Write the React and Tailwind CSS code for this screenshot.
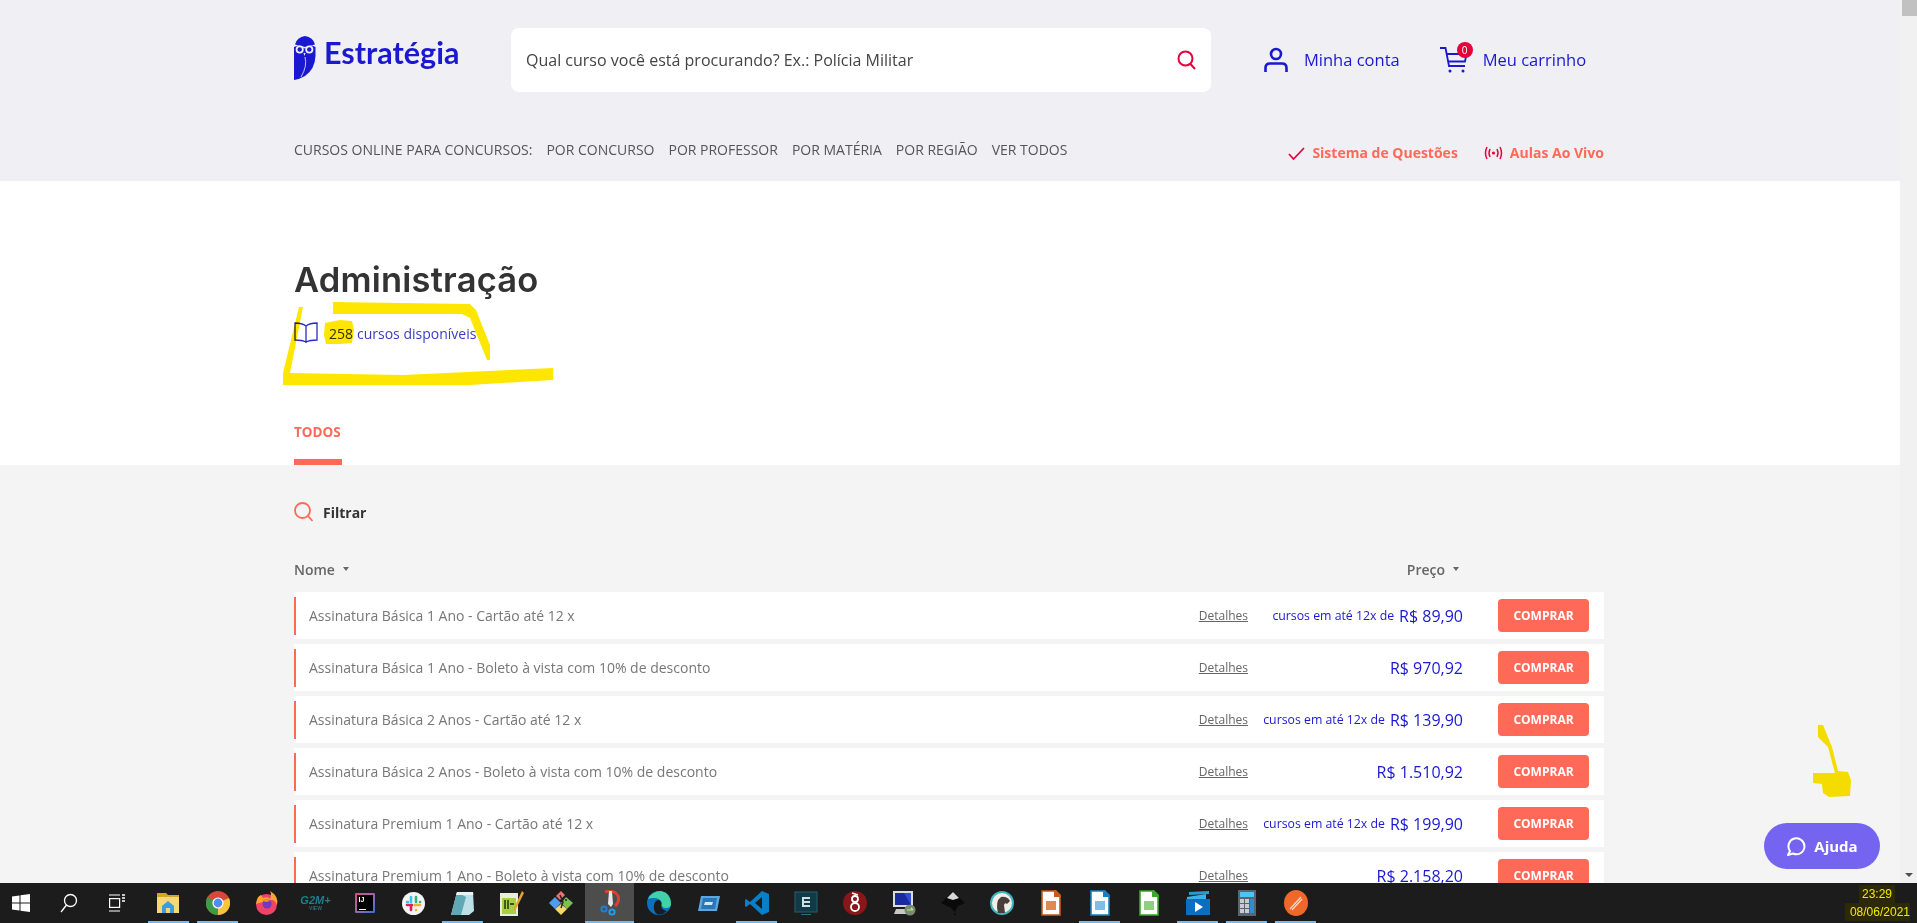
import React from 'react';

const courses = [
  { name: 'Assinatura Básica 1 Ano - Cartão até 12 x', installment: true, price: 'R$ 89,90' },
  { name: 'Assinatura Básica 1 Ano - Boleto à vista com 10% de desconto', price: 'R$ 970,92' },
  { name: 'Assinatura Básica 2 Anos - Cartão até 12 x', installment: true, price: 'R$ 139,90' },
  { name: 'Assinatura Básica 2 Anos - Boleto à vista com 10% de desconto', price: 'R$ 1.510,92' },
  { name: 'Assinatura Premium 1 Ano - Cartão até 12 x', installment: true, price: 'R$ 199,90' },
  { name: 'Assinatura Premium 1 Ano - Boleto à vista com 10% de desconto', price: 'R$ 2.158,20' },
];

const navLinks = ['POR CONCURSO', 'POR PROFESSOR', 'POR MATÉRIA', 'POR REGIÃO', 'VER TODOS'];

const OwlLogo = () => (
  <svg width="22" height="44" viewBox="0 0 22 44" className="shrink-0">
    <path d="M1 8.5 Q3 1 11 0 Q19 1 21 8.5 L11 11 Z" fill="#1a18d0" />
    <path d="M0 11 L4 9.5 L11 12.5 L18 9.5 L21.5 11 V20 Q21 33 11 40 Q6 43 0 44 Z" fill="#1a18d0" />
    <circle cx="5.7" cy="13.5" r="4" fill="#efeff4" />
    <circle cx="15.3" cy="13.5" r="4" fill="#efeff4" />
    <circle cx="5.7" cy="13.5" r="2.2" fill="#1a18d0" />
    <circle cx="15.3" cy="13.5" r="2.2" fill="#1a18d0" />
    <path d="M9.5 17 L10.5 20 L11.6 17 Z" fill="#efeff4" />
    <path d="M11 21 Q13.5 30 7 41" fill="none" stroke="#efeff4" strokeWidth="0.8" />
  </svg>
);

const UserIcon = () => (
  <svg width="24" height="26" viewBox="0 0 24 26" fill="none" stroke="#1a18d0" strokeWidth="2.6">
    <circle cx="12" cy="7" r="5" />
    <path d="M1.5 25 V21 Q1.5 16.5 6 16.5 H18 Q22.5 16.5 22.5 21 V25" />
  </svg>
);

const CartIcon = () => (
  <svg width="28" height="26" viewBox="0 0 28 26" fill="none" stroke="#1a18d0" strokeWidth="1.8">
    <path d="M0 1 H5.5 L9 19 H25" />
    <path d="M6.5 7 H26.5 L25 14.5 H8" />
    <circle cx="10" cy="24" r="1.5" fill="#1a18d0" stroke="none" />
    <circle cx="23" cy="24" r="1.5" fill="#1a18d0" stroke="none" />
  </svg>
);

const LiveIcon = () => (
  <svg width="19" height="14" viewBox="0 0 19 14" fill="none" stroke="#e8003a" strokeWidth="1.5">
    <circle cx="9.5" cy="7" r="1.6" fill="#e8003a" stroke="none" />
    <path d="M6 3 Q4 7 6 11 M13 3 Q15 7 13 11" />
    <path d="M3 1 Q0 7 3 13 M16 1 Q19 7 16 13" />
  </svg>
);

const SortArrow = () => <span className="ml-2 h-0 w-0 border-x-[3px] border-t-[4px] border-x-transparent border-t-[#666]" />;

const CourseRow = ({ course }) => (
  <div className="mb-[5px] flex h-[47px] w-[1310px] shrink-0 items-center bg-white pr-[15px]">
    <div className="h-[38px] w-[2px] bg-[#ff6958]" />
    <span className="ml-[13px] text-[14px] text-[#777]">{course.name}</span>
    <a className="ml-auto text-[12px] text-[#666] underline">Detalhes</a>
    <div className="flex w-[215px] items-center justify-end whitespace-nowrap text-[#1a18d0]">
      {course.installment && <span className="mr-[5px] mt-[2px] text-[12.3px]">cursos em até 12x de</span>}
      <span className="text-[16px] font-medium">{course.price}</span>
    </div>
    <button className="ml-[35px] h-[33px] w-[91px] rounded-[4px] bg-[#ff6958] text-[12px] font-bold text-white">COMPRAR</button>
  </div>
);

// taskbar icons, all on a 28 box
const Icons = {
  Explorer: () => (
    <svg width="24" height="22" viewBox="0 0 24 22">
      <path d="M0 1 H9 L11 3 H22 V21 H0 Z" fill="#d9a520" />
      <path d="M0 5 H22 V21 H0 Z" fill="#f7d774" />
      <path d="M5 14 L11 9 L17 14 V21 H13 V16 H9 V21 H5 Z" fill="#3a9be8" />
    </svg>
  ),
  Chrome: () => (
    <svg width="24" height="24" viewBox="0 0 24 24">
      <circle cx="12" cy="12" r="12" fill="#d8483a" />
      <path d="M12 12 L1.5 6 A12 12 0 0 0 12 24 Z" fill="#3f9a48" />
      <path d="M12 12 L12 24 A12 12 0 0 0 23 7 Z" fill="#f5c63c" />
      <circle cx="12" cy="12" r="5.6" fill="#fff" />
      <circle cx="12" cy="12" r="4.4" fill="#4d8ef0" />
    </svg>
  ),
  Firefox: () => (
    <svg width="24" height="24" viewBox="0 0 24 24">
      <circle cx="11.5" cy="13.5" r="10.5" fill="#f0436a" />
      <path d="M1 13 Q2 5 6 4 L8 7 Q13 5 15 8 Q17 3 15 0 Q24 5 22 14 Q20 8 14 9 Z" fill="#ffa42e" />
      <circle cx="12" cy="13" r="4.5" fill="#6d3bc4" />
      <path d="M6 9 Q11 7 15 10 L11 11 Z" fill="#ff8a2a" />
    </svg>
  ),
  G2m: () => (
    <div className="flex flex-col items-center leading-none">
      <span className="font-['Liberation_Sans',sans-serif] text-[11px] font-bold italic text-[#1f7f8c]">G2M+</span>
      <span className="font-['Liberation_Sans',sans-serif] text-[5px] font-bold text-[#2a6f7a]">VIEW</span>
    </div>
  ),
  Idea: () => (
    <div className="rounded-[1px] bg-gradient-to-br from-[#e0417e] to-[#2a6fd6] p-[2px]">
      <div className="flex h-[16px] w-[16px] flex-col justify-between bg-black px-[2px] py-[1px] font-['Liberation_Sans',sans-serif] text-[7px] font-bold leading-none text-white">
        <span>IJ</span>
        <span className="h-[1px] w-[7px] bg-white" />
      </div>
    </div>
  ),
  Slack: () => (
    <svg width="23" height="23" viewBox="0 0 23 23">
      <circle cx="11.5" cy="11.5" r="11.5" fill="#f4f4f4" />
      <g strokeWidth="2.6" strokeLinecap="round">
        <path d="M9 5 V10 M5 10 H6" stroke="#36c5f0" />
        <path d="M14 5 V10 M18 10 H18" stroke="#2eb67d" />
        <path d="M18 13 H13 M14 18 V18" stroke="#ecb22e" />
        <path d="M5 13 H10 M9 18 V14" stroke="#e01e5a" />
      </g>
    </svg>
  ),
  Notepad: () => (
    <svg width="24" height="25" viewBox="0 0 24 25">
      <path d="M6 1 H22 L23 20 L18 24 H0 Z" fill="#bde0e6" />
      <path d="M6 1 L0 24 H10 L15 6 Z" fill="#5fa8b5" />
      <path d="M6 1 H22 L22.3 4 H5 Z" fill="#e9f2f3" />
    </svg>
  ),
  Npp: () => (
    <svg width="24" height="26" viewBox="0 0 24 26">
      <path d="M0 3 H18 V26 H0 Z" fill="#e8eed8" />
      <path d="M2 8 H16 V24 H2 Z" fill="#a7cf3f" />
      <path d="M5 10 V19 M8 10 V19 M10 14 H14" stroke="#1a2a10" strokeWidth="1.4" />
      <path d="M22 1 L14 18 L13 21 L16 19 L24 3 Z" fill="#e8a028" />
    </svg>
  ),
  Git: () => (
    <svg width="24" height="26" viewBox="0 0 24 26">
      <path d="M7 6 L12 1 L16 5 L11 10 Z" fill="#f07070" />
      <path d="M0 13 L6 7 L12 13 L6 19 Z" fill="#4f9bef" />
      <path d="M12 13 L17 7 L24 13 L18 19 Z" fill="#7cc04f" />
      <path d="M6 19 L12 14 L18 19 L12 25 Z" fill="#f5d86a" />
      <path d="M11 5 L14 12 L12 18 M16 10 H18" stroke="#222" strokeWidth="1.4" fill="none" />
    </svg>
  ),
  Snip: () => (
    <svg width="20" height="26" viewBox="0 0 20 26">
      <path d="M5 2 Q14 -1 18 6 Q20 12 15 16" fill="none" stroke="#d8432a" strokeWidth="3" />
      <path d="M9 1 H12 L13 14 L11 17 L8 14 Z" fill="#e8e8e8" />
      <circle cx="4" cy="19" r="2.6" fill="none" stroke="#1c7fd8" strokeWidth="2" />
      <circle cx="12" cy="22" r="2.6" fill="none" stroke="#1c9fe8" strokeWidth="2" />
    </svg>
  ),
  Edge: () => (
    <svg width="24" height="24" viewBox="0 0 24 24">
      <circle cx="12" cy="12" r="12" fill="#0c6fc0" />
      <path d="M1 8 Q5 0 14 0 Q24 2 24 13 Q24 17 19 17 Q14 17 15 12 Q13 7 7 7 Q3 7 1 8 Z" fill="#3fd3a6" />
      <path d="M7 14 Q8 9 12 9 Q15 10 14 14 Q14 19 20 20 Q15 25 10 23 Q6 20 7 14 Z" fill="#1c1c1c" />
    </svg>
  ),
  Glass: () => (
    <svg width="24" height="18" viewBox="0 0 24 18">
      <path d="M5 2 H24 L21 17 H2 Z" fill="#5aa8e0" />
      <path d="M7 4 H21 L19 15 H5 Z" fill="#2c75b8" />
      <path d="M9 8 H17 L16 11 H8 Z" fill="#cfe8f8" />
    </svg>
  ),
  Vscode: () => (
    <svg width="24" height="24" viewBox="0 0 24 24">
      <path d="M17 0 L24 3 V21 L17 24 L5 13 L1 16 L0 15 V9 L1 8 L5 11 Z" fill="#0a7fc6" />
      <path d="M17 6 L10 12 L17 18 Z" fill="#1c1c1c" />
    </svg>
  ),
  Terminal: () => (
    <svg width="24" height="25" viewBox="0 0 24 25">
      <rect x="1" y="1" width="22" height="20" fill="#0f3a46" stroke="#2b5f6c" />
      <path d="M8 6 H16 V8 H10 V10 H16 V12 H10 V14 H16 V16 H8 Z" fill="#cfe0e4" />
      <rect x="7" y="23" width="10" height="1" fill="#2b6f7c" />
    </svg>
  ),
  Wireguard: () => (
    <svg width="24" height="24" viewBox="0 0 24 24">
      <circle cx="12" cy="12" r="12" fill="#88171a" />
      <circle cx="12" cy="16" r="4" fill="none" stroke="#fff" strokeWidth="1.8" />
      <circle cx="12" cy="8" r="3" fill="none" stroke="#fff" strokeWidth="1.8" />
      <path d="M9 2 L15 4" stroke="#fff" strokeWidth="1.6" />
    </svg>
  ),
  Remote: () => (
    <svg width="24" height="26" viewBox="0 0 24 26">
      <rect x="1" y="1" width="20" height="16" fill="#dcdcdc" />
      <path d="M3 3 H19 V15 H3 Z" fill="#2f4fd0" />
      <path d="M3 3 L12 3 L19 15 L3 15 Z" fill="#1a2a9c" />
      <path d="M4 19 H18 L20 24 H2 Z" fill="#c8c8c8" />
      <circle cx="18" cy="20" r="5.5" fill="#7a8a70" />
      <path d="M15 20 L21 20 M19 18 L21 20" stroke="#aef08a" strokeWidth="1.2" />
    </svg>
  ),
  Inkscape: () => (
    <svg width="24" height="24" viewBox="0 0 24 24">
      <path d="M12 0 L24 12 L17 15 L14 21 L10 17 L0 12 Z" fill="#0a0a0a" />
      <path d="M12 1 L18 7 L12 9 L6 7 Z" fill="#d8d8d8" />
      <circle cx="14" cy="23" r="1" fill="#0a0a0a" />
    </svg>
  ),
  Dbeaver: () => (
    <svg width="24" height="24" viewBox="0 0 24 24">
      <circle cx="12" cy="12" r="11" fill="#f0eee8" stroke="#3fb3bf" strokeWidth="2" />
      <path d="M8 22 Q5 10 11 6 Q17 5 20 10 L17 13 Q15 11 14 14 L15 22 Z" fill="#4a3f38" />
    </svg>
  ),
  DocFile: ({ color, tint }) => (
    <svg width="20" height="26" viewBox="0 0 20 26">
      <path d="M1 1 H14 L19 6 V25 H1 Z" fill="#fff" stroke={color} strokeWidth="1.6" />
      <path d="M13 0 H15 L20 5 V7 H13 Z" fill={color} />
      <rect x="5" y="11" width="10" height="9" fill={tint} />
    </svg>
  ),
  Player: () => (
    <svg width="24" height="24" viewBox="0 0 24 24">
      <path d="M1 6 L20 3 V8 H1 Z" fill="#3fb0e8" />
      <path d="M3 1 L23 0 V3 L3 4 Z" fill="#2a9ad8" />
      <rect x="0" y="8" width="24" height="16" fill="#0a6fc0" />
      <path d="M9 11 L17 16 L9 21 Z" fill="#fff" />
    </svg>
  ),
  Calc: () => (
    <svg width="18" height="26" viewBox="0 0 18 26">
      <rect width="18" height="26" fill="#5b6570" />
      <rect x="2" y="2" width="14" height="5" fill="#4ec5f0" />
      <g fill="#c6ccd2">
        <rect x="2" y="9" width="4" height="4" /><rect x="7" y="9" width="4" height="4" />
        <rect x="2" y="14" width="4" height="4" /><rect x="7" y="14" width="4" height="4" />
        <rect x="2" y="19" width="4" height="4" /><rect x="7" y="19" width="4" height="4" />
      </g>
      <rect x="12" y="9" width="4" height="14" fill="#2b8fd0" />
    </svg>
  ),
  Sublime: () => (
    <svg width="24" height="26" viewBox="0 0 24 26">
      <ellipse cx="12" cy="13" rx="12" ry="13" fill="#f0672a" />
      <path d="M6 19 L17 7 M8 20 L18 9" stroke="#ffd9c4" strokeWidth="1.2" />
    </svg>
  ),
};

const taskbarApps = [
  { icon: <Icons.Explorer />, open: true },
  { icon: <Icons.Chrome />, open: true },
  { icon: <Icons.Firefox /> },
  { icon: <Icons.G2m /> },
  { icon: <Icons.Idea /> },
  { icon: <Icons.Slack /> },
  { icon: <Icons.Notepad />, open: true },
  { icon: <Icons.Npp /> },
  { icon: <Icons.Git /> },
  { icon: <Icons.Snip />, open: true, active: true },
  { icon: <Icons.Edge /> },
  { icon: <Icons.Glass /> },
  { icon: <Icons.Vscode />, open: true },
  { icon: <Icons.Terminal /> },
  { icon: <Icons.Wireguard /> },
  { icon: <Icons.Remote /> },
  { icon: <Icons.Inkscape /> },
  { icon: <Icons.Dbeaver /> },
  { icon: <Icons.DocFile color="#c85a1a" tint="#e08a50" /> },
  { icon: <Icons.DocFile color="#1a7fc0" tint="#7cc0e8" />, open: true },
  { icon: <Icons.DocFile color="#3aa82a" tint="#8fd080" /> },
  { icon: <Icons.Player />, open: true },
  { icon: <Icons.Calc />, open: true },
  { icon: <Icons.Sublime />, open: true },
];

const Taskbar = () => (
  <div className="relative flex h-[40px] shrink-0 items-center bg-[#1c1c1c] font-['Liberation_Sans',sans-serif]">
    <div className="flex w-[42px] justify-center">
      <svg width="18" height="18" viewBox="0 0 18 18" fill="#fff">
        <path d="M0 2.5 L7.5 1.4 V8.5 H0 Z M8.5 1.3 L18 0 V8.5 H8.5 Z M0 9.5 H7.5 V16.6 L0 15.5 Z M8.5 9.5 H18 V18 L8.5 16.7 Z" />
      </svg>
    </div>
    <div className="flex w-[54px] justify-center">
      <svg width="18" height="20" viewBox="0 0 18 20" fill="none" stroke="#fff" strokeWidth="1.3">
        <circle cx="10.5" cy="7.5" r="6" />
        <path d="M6.5 12 L1 19" />
      </svg>
    </div>
    <div className="flex w-[42px] justify-center">
      <svg width="16" height="18" viewBox="0 0 16 18" fill="none" stroke="#fff" strokeWidth="1.2">
        <path d="M0 1 H11 M0 17 H11" />
        <rect x="0.6" y="4.6" width="10" height="8.8" />
        <path d="M13 1 H16 M13 4 H16 M13 7 H16" strokeWidth="1.6" />
      </svg>
    </div>
    <div className="ml-[6px] flex h-full">
      {taskbarApps.map((app, i) => (
        <div key={i} className={`relative flex h-full w-[49px] items-center justify-center ${app.active ? 'bg-[#4d4d4d]' : ''}`}>
          {app.icon}
          {app.open && <span className={`absolute bottom-0 h-[2px] bg-[#76b9ed] ${app.active ? 'inset-x-0' : 'inset-x-[4px]'}`} />}
        </div>
      ))}
    </div>
    <div className="ml-auto flex w-[78px] flex-col items-end pr-[7px] text-[12px] leading-[18px] text-[#f5e800]">
      <span className="mr-[15px] bg-[#2c2a05] px-[3px]">23:29</span>
      <span className="bg-[#2c2a05] pl-[5px]">08/06/2021</span>
    </div>
  </div>
);

const App = () => {
  return (
    <div className="relative flex h-[923px] w-[1917px] flex-col overflow-hidden bg-[#f4f4f4] font-['Open_Sans',sans-serif]">
      <div className="flex min-h-0 flex-1">
        <main className="flex min-w-0 flex-1 flex-col overflow-hidden">
          {/* Header */}
          <header className="h-[181px] shrink-0 bg-[#efeff4] pl-[294px] pr-[296px]">
            <div className="flex h-[140px] items-start pt-[28px]">
              <div className="flex w-[217px] items-start pt-[8px]">
                <OwlLogo />
                <span className="ml-[8px] mt-[-2px] font-['Lato',sans-serif] text-[30.5px] font-bold leading-[36px] text-[#1a18d0]">Estratégia</span>
              </div>
              <div className="flex h-[64px] w-[700px] items-center justify-between rounded-[8px] bg-white pl-[15px] pr-[15px]">
                <span className="text-[16px] text-[#444]">Qual curso você está procurando? Ex.: Polícia Militar</span>
                <svg width="19" height="20" viewBox="0 0 19 20" fill="none" stroke="#e8003a" strokeWidth="2">
                  <circle cx="8.5" cy="8.5" r="7" />
                  <path d="M13.5 14 L18 19" />
                </svg>
              </div>
              <div className="ml-[53px] flex h-[64px] items-center">
                <UserIcon />
                <span className="ml-[16px] text-[16.5px] font-medium text-[#1a18d0]">Minha conta</span>
              </div>
              <div className="ml-[40px] flex h-[64px] items-center">
                <div className="relative">
                  <CartIcon />
                  <span className="absolute right-[-5px] top-[-5px] flex h-[16px] w-[16px] items-center justify-center rounded-full bg-[#e8003a] text-[10px] leading-none text-white">0</span>
                </div>
                <span className="ml-[15px] text-[16.5px] font-medium text-[#1a18d0]">Meu carrinho</span>
              </div>
            </div>
            <div className="flex items-start justify-between">
              <nav className="flex gap-[14px] text-[14px] leading-[20px] text-[#555]">
                <span>CURSOS ONLINE PARA CONCURSOS:</span>
                {navLinks.map((link) => (
                  <a key={link}>{link}</a>
                ))}
              </nav>
              <div className="mt-[3px] flex items-center text-[14px] font-bold leading-[20px] text-[#ff6958]">
                <svg width="17" height="13" viewBox="0 0 17 13" fill="none" stroke="#e8003a" strokeWidth="1.7" className="mr-[7px]">
                  <path d="M1 7 L5.5 12 L16 1" />
                </svg>
                <span>Sistema de Questões</span>
                <span className="ml-[26px] mr-[7px]"><LiveIcon /></span>
                <span>Aulas Ao Vivo</span>
              </div>
            </div>
          </header>

          {/* Title */}
          <section className="h-[284px] shrink-0 bg-white pl-[294px]">
            <h1 className="pt-[78px] font-['Inter',sans-serif] text-[34.5px] font-semibold leading-[42px] tracking-[0.2px] text-[#333]">Administração</h1>
            <div className="mt-[21px] flex h-[22px] items-center">
              <svg width="24" height="22" viewBox="0 0 24 22" fill="none" stroke="#2a28c8" strokeWidth="1.3">
                <path d="M12 4 Q8 1 1 1 V18 Q8 18 12 20 Q16 18 23 18 V1 Q16 1 12 4 Z M12 4 V21" />
              </svg>
              <span className="ml-[11px] text-[14px] text-[#333]">258</span>
              <span className="ml-[4px] text-[14px] text-[#3b3bc4]">cursos disponíveis</span>
            </div>
            <div className="mt-[78px] w-[48px]">
              <div className="text-[13.5px] font-bold leading-[20px] text-[#ff6958]">TODOS</div>
              <div className="mt-[17px] h-[6px] bg-[#ff6958]" />
            </div>
          </section>

          {/* Course list */}
          <section className="flex min-h-0 flex-1 flex-col pl-[294px]">
            <div className="mt-[37px] flex h-[20px] items-center">
              <svg width="19" height="20" viewBox="0 0 19 20" fill="none" stroke="#ff6958" strokeWidth="1.8">
                <circle cx="8.5" cy="8.5" r="7.5" />
                <path d="M14 14 L18.5 19" />
              </svg>
              <span className="ml-[10px] text-[14px] font-bold text-[#333]">Filtrar</span>
            </div>
            <div className="mt-[37px] flex h-[20px] w-[1310px] items-center text-[14px] font-semibold text-[#666]">
              <span className="flex items-center">Nome<SortArrow /></span>
              <span className="ml-auto mr-[145px] flex items-center">Preço<SortArrow /></span>
            </div>
            <div className="mt-[13px] flex flex-col">
              {courses.map((course) => (
                <CourseRow key={course.name} course={course} />
              ))}
            </div>
          </section>
        </main>

        {/* Scrollbar */}
        <div className="flex w-[17px] shrink-0 flex-col justify-between bg-[#f1f1f1]">
          <div className="ml-[2px] h-[16px] w-[15px] bg-[#c1c1c1]" />
          <div className="mb-[6px] h-0 w-0 self-center border-x-[4px] border-t-[4px] border-x-transparent border-t-[#505050]" />
        </div>
      </div>

      <Taskbar />

      {/* Ajuda button */}
      <button className="absolute left-[1764px] top-[823px] flex h-[46px] w-[116px] items-center justify-center rounded-full bg-[#7464f0] text-[15px] font-bold text-white">
        <svg width="20" height="20" viewBox="0 0 20 20" fill="none" stroke="#fff" strokeWidth="2" className="mr-[8px]">
          <path d="M4 15 A8 8 0 1 1 7 17.5 L2 19 Z" strokeLinejoin="round" />
        </svg>
        Ajuda
      </button>

      {/* Yellow marker annotations drawn over the screenshot */}
      <svg className="pointer-events-none absolute inset-0 mix-blend-multiply" width="1917" height="923" fill="#ffe600">
        <path d="M299 307 L303 307 L290 373 L403 375 L553 368 L553 380 L470 385 L283 385 L283 373 Z" />
        <path d="M333 302 L470 304 L476 310 L490 345 L490 360 L487 360 L470 318 L462 314 L333 314 Z" />
        <path d="M325 323 L340 320 L352 321 L354 330 L352 343 L340 344 L326 344 L324 335 Z" />
        <path d="M1818 725 L1823 725 L1832 747 L1838 771 L1848 772 L1851 780 L1850 796 L1829 797 L1823 793 L1822 784 L1813 783 L1813 773 L1835 773 L1828 747 L1818 737 Z" />
      </svg>
    </div>
  );
};

export default App;
